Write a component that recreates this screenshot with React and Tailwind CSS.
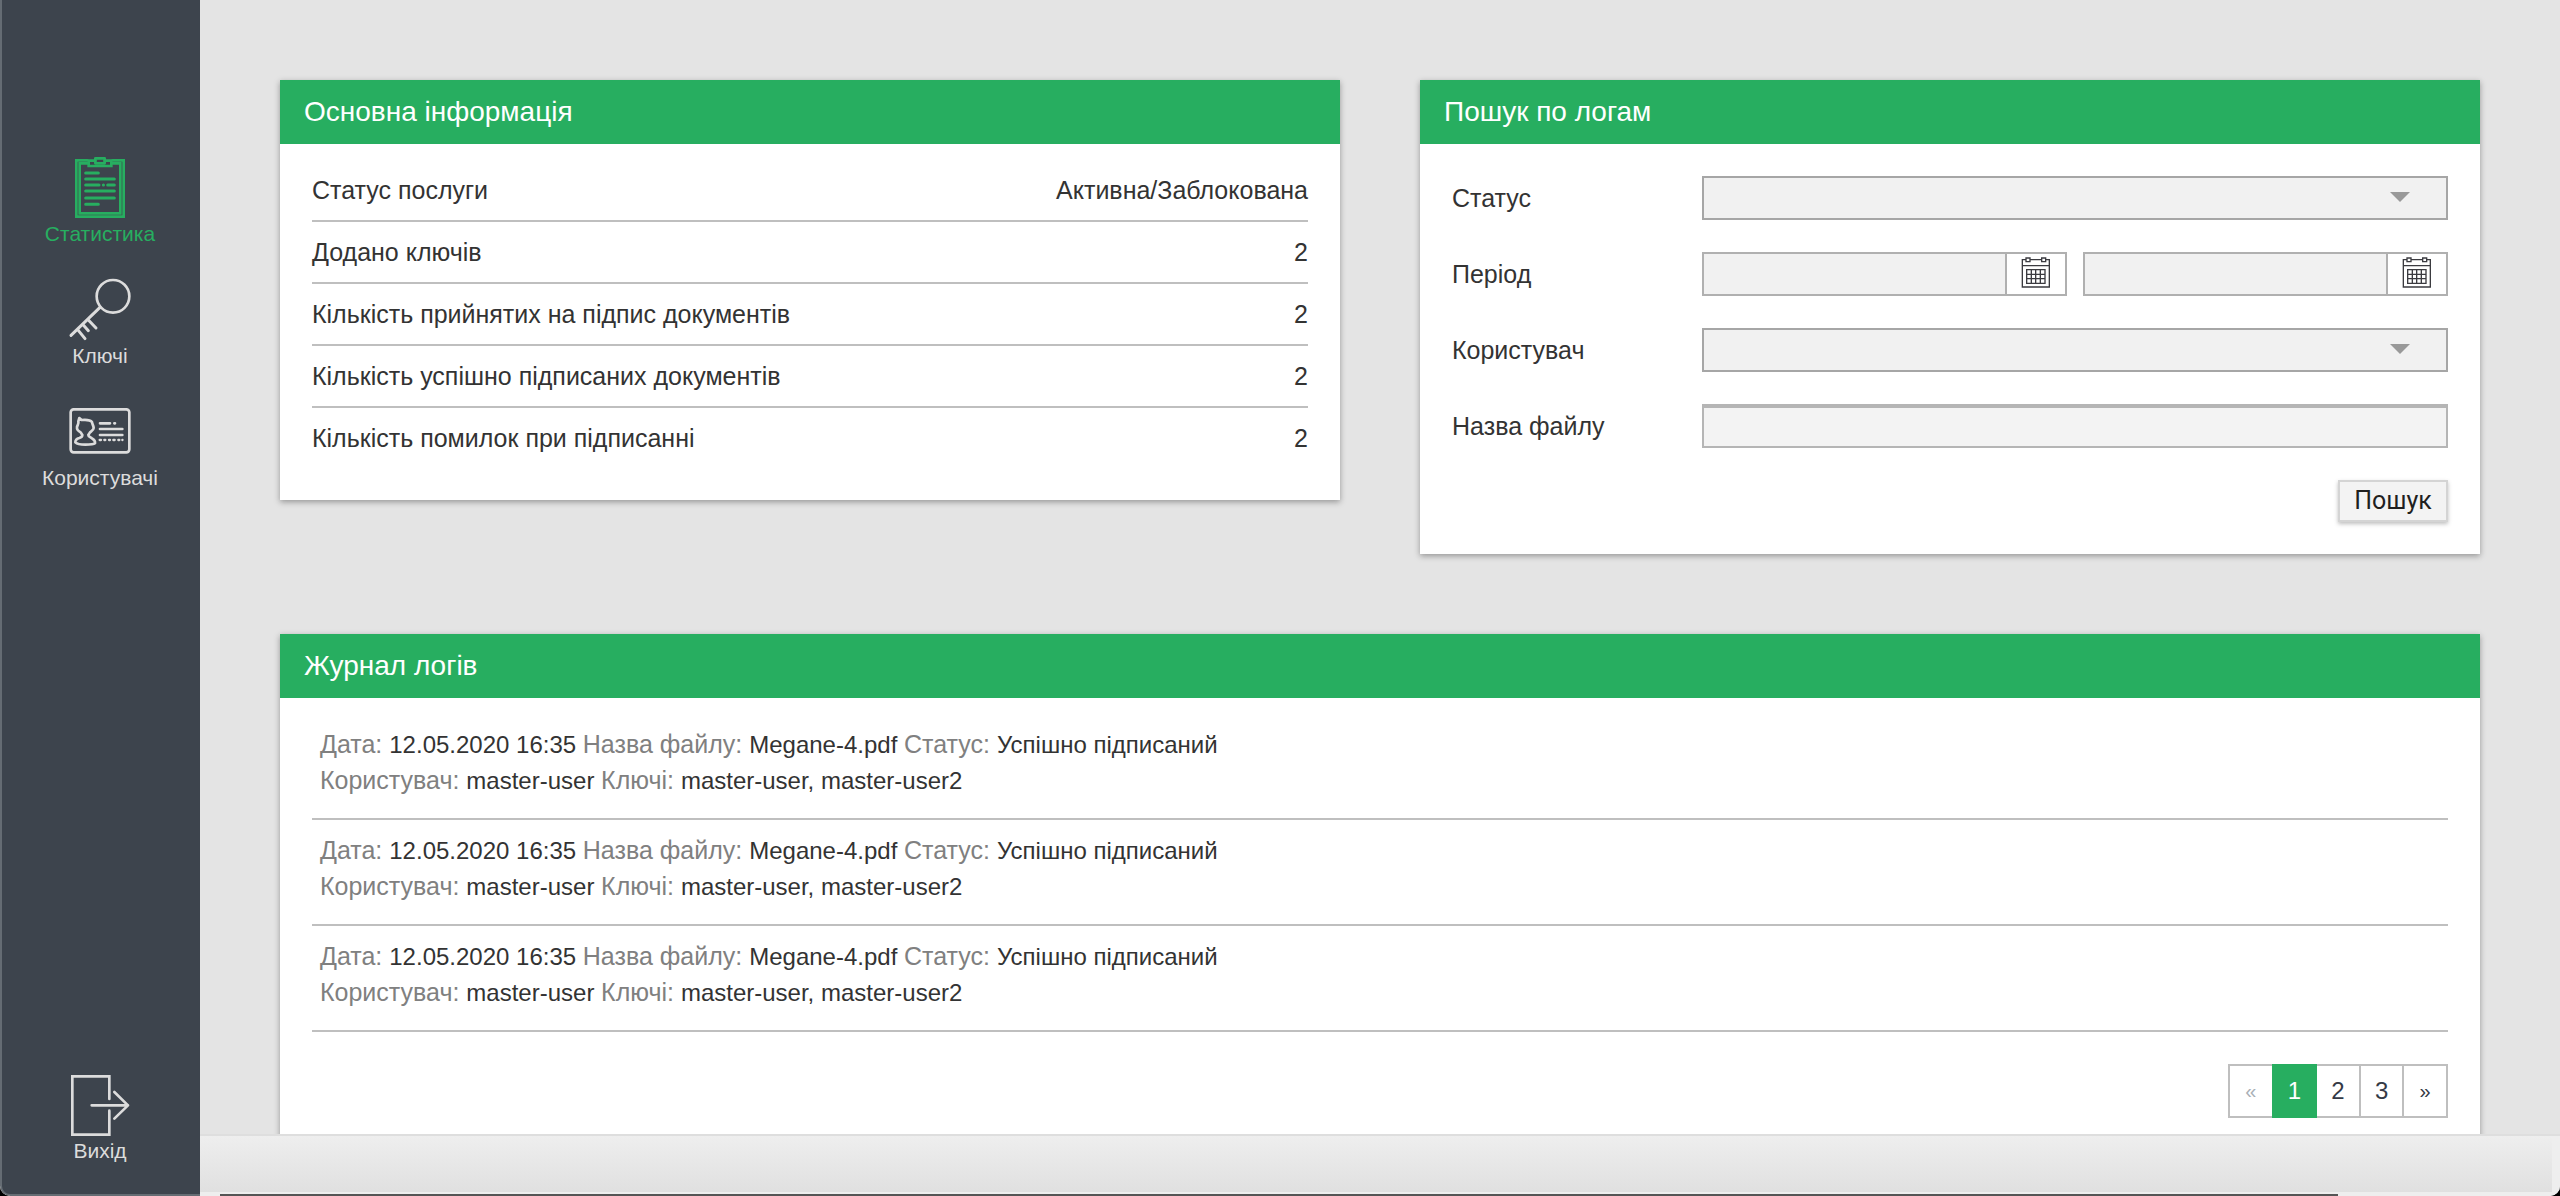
import React from "react";

const stats = [
  ["Статус послуги", "Активна/Заблокована"],
  ["Додано ключів", "2"],
  ["Кількість прийнятих на підпис документів", "2"],
  ["Кількість успішно підписаних документів", "2"],
  ["Кількість помилок при підписанні", "2"],
];

const log = {
  date: "12.05.2020 16:35",
  file: "Megane-4.pdf",
  status: "Успішно підписаний",
  user: "master-user",
  keys: "master-user, master-user2",
};
const logs = [log, log, log];

function NavSvg({ children }) {
  return (
    <svg
      viewBox="0 0 192 192"
      className="size-16"
      fill="none"
      stroke="currentColor"
      strokeWidth="8"
      strokeLinecap="round"
      strokeLinejoin="round"
      aria-hidden="true"
    >
      {children}
    </svg>
  );
}

function ClipboardIcon() {
  return (
    <NavSvg>
      <path d="M58 13H25V182H167V13H134" strokeLinejoin="miter" />
      <path d="M60 22H35V172H157V22H132" strokeLinejoin="miter" />
      <path d="M82 14H62V30H130V14H110" strokeLinejoin="miter" />
      <path d="M82 7H110V22H82Z" />
      <path d="M53 51H91M53 69H139M53 87H93M106 87H106.5M119 87H139M53 105H139M53 126H139M53 145H91" strokeWidth="9" />
    </NavSvg>
  );
}

function KeyIcon() {
  return (
    <NavSvg>
      <circle cx="135" cy="55" r="49" />
      <path d="M96 88L9 172M59 124L84 150M44 139L61 158M29 155L51 182" strokeWidth="9" />
    </NavSvg>
  );
}

function UsersIcon() {
  return (
    <NavSvg>
      <rect x="8" y="28" width="176" height="129" rx="9" />
      <path d="M34 54L41 60C52 59 66 58 72 66C72 72 76 74 77 84C77 90 71 93 66 97L61 105C61 110 66 111 72 115C79 119 82 124 81 130C76 134 64 134 52 134C40 134 28 133 22 127C22 120 26 116 34 114C41 112 43 110 43 105L38 97C30 93 26 88 27 81C28 75 33 72 31 64Z" />
      <path d="M96 70H126M139 70H141M96 87H163M96 105H163" />
      <path d="M95 120H99M109 120H112M123 120H126M136 120H140M151 120H154M163 120H163.5" strokeWidth="7" />
    </NavSvg>
  );
}

function ExitIcon() {
  return (
    <NavSvg>
      <path d="M124 78V10H13V185H124V113" strokeLinejoin="miter" />
      <path d="M71 97H180M139 57L180 97L139 137" />
    </NavSvg>
  );
}

function CalendarIcon() {
  return (
    <svg viewBox="0 0 96 96" className="size-8" fill="none" stroke="#3b3b40" strokeWidth="4" aria-hidden="true">
      <path d="M18 11H7V93H88V11H77M30 11H65M7 29H88" />
      <path d="M18 6H30V17H18ZM65 6H77V17H65Z" />
      <path d="M20 41H75V82H20ZM34 41V82M47 41V82M61 41V82M20 55H75M20 68H75" />
    </svg>
  );
}

function NavItem({ icon, label, active }) {
  return (
    <a
      href="#"
      aria-current={active ? "page" : undefined}
      className={
        active
          ? "flex flex-col items-center gap-0.5 text-[21px] leading-6 text-[#27ae60]"
          : "flex flex-col items-center gap-0.5 text-[21px] leading-6 text-[#dcdcdc]"
      }
    >
      {icon}
      {label}
    </a>
  );
}

function Card({ title, children }) {
  return (
    <section className="bg-white shadow-[0_2px_6px_rgba(0,0,0,0.35)]">
      <h2 className="bg-[#27ae60] px-6 text-[28px] leading-16 text-white">{title}</h2>
      {children}
    </section>
  );
}

function SelectField({ id }) {
  return (
    <div className="relative">
      <select id={id} className="block h-11 w-full appearance-none border-2 border-[#a6a6a6] bg-[#f1f1f1] px-3">
        <option value=""></option>
      </select>
      <svg viewBox="0 0 20 10" className="pointer-events-none absolute top-4 right-[38px] h-2.5 w-5 fill-[#999999]" aria-hidden="true">
        <path d="M0 0H20L10 10Z" />
      </svg>
    </div>
  );
}

function DateField({ id, label }) {
  return (
    <div className="flex h-11 min-w-0 flex-1 border-2 border-[#b0b0b0]">
      <input id={id} type="text" aria-label={label} className="min-w-0 flex-1 bg-[#f1f1f1] px-3 outline-none" />
      <button
        type="button"
        aria-label="Відкрити календар"
        className="flex w-[60px] shrink-0 justify-center border-l-2 border-[#b0b0b0] bg-white pt-0.5"
      >
        <CalendarIcon />
      </button>
    </div>
  );
}

function FormRow({ id, label, children }) {
  return (
    <div className="grid grid-cols-[250px_minmax(0,1fr)] items-center">
      <label htmlFor={id}>{label}</label>
      {children}
    </div>
  );
}

function Field({ name, value }) {
  return (
    <>
      <span className="text-[25px] text-[#808080]">{name}: </span>
      {value}{" "}
    </>
  );
}

const pageBase = "-ml-0.5 flex flex-1 items-center justify-center border-2 first:ml-0";

export default function App() {
  return (
    <div className="h-screen bg-black font-['Liberation_Sans',Arial,sans-serif] text-[25px] leading-9 text-[#333333]">
      <div className="flex h-full overflow-hidden rounded-b-[10px] bg-[#e4e4e4]">
        <nav className="flex w-[200px] shrink-0 flex-col justify-between rounded-bl-[10px] border-b-2 border-l-2 border-[#656c73] bg-[#3d444d] pt-39 pr-0.5 pb-[31px]">
          <div className="flex flex-col gap-8">
            <NavItem icon={<ClipboardIcon />} label="Статистика" active />
            <NavItem icon={<KeyIcon />} label="Ключі" />
            <NavItem icon={<UsersIcon />} label="Користувачі" />
          </div>
          <NavItem icon={<ExitIcon />} label="Вихід" />
        </nav>

        <div className="flex min-w-0 flex-1 flex-col">
          <main className="flex min-h-0 flex-1 flex-col gap-20 overflow-hidden p-20 pb-0">
            <div className="grid grid-cols-2 items-start gap-20">
              <Card title="Основна інформація">
                <table className="mx-8 mt-4 mb-8 w-[calc(100%-64px)] border-collapse">
                  <tbody>
                    {stats.map(([name, value]) => (
                      <tr key={name} className="border-b-2 border-[#bfbfbf] last:border-0">
                        <th scope="row" className="py-3 text-left font-normal">{name}</th>
                        <td className="py-3 text-right">{value}</td>
                      </tr>
                    ))}
                  </tbody>
                </table>
              </Card>

              <Card title="Пошук по логам">
                <form className="flex flex-col gap-8 p-8">
                  <FormRow id="status" label="Статус">
                    <SelectField id="status" />
                  </FormRow>
                  <FormRow id="from" label="Період">
                    <div className="flex gap-4">
                      <DateField id="from" label="Період від" />
                      <DateField id="to" label="Період до" />
                    </div>
                  </FormRow>
                  <FormRow id="user" label="Користувач">
                    <SelectField id="user" />
                  </FormRow>
                  <FormRow id="file" label="Назва файлу">
                    <input
                      id="file"
                      type="text"
                      className="h-11 w-full border-2 border-t-4 border-[#b5b5b5] bg-[#f3f3f3] px-3 outline-none"
                    />
                  </FormRow>
                  <button
                    type="button"
                    className="flex h-[42px] w-[110px] items-center justify-center self-end border-2 border-[#d4d4d4] bg-[#f3f3f3] font-['Roboto',sans-serif] text-[#1f1f1f] shadow-[0_2px_4px_rgba(0,0,0,0.25)]"
                  >
                    Пошук
                  </button>
                </form>
              </Card>
            </div>

            <Card title="Журнал логів">
              <div className="px-8 pt-4 pb-8 text-[24px]">
                <ul>
                  {logs.map((l, i) => (
                    <li key={i} className="border-b-2 border-[#bfbfbf] px-2 pt-3 pb-5">
                      <p className="h-9">
                        <Field name="Дата" value={l.date} />
                        <Field name="Назва файлу" value={l.file} />
                        <Field name="Статус" value={l.status} />
                      </p>
                      <p className="h-9">
                        <Field name="Користувач" value={l.user} />
                        <Field name="Ключі" value={l.keys} />
                      </p>
                    </li>
                  ))}
                </ul>
                <div className="mt-8 ml-auto flex h-[54px] w-[220px] text-[#343a46]">
                  <button type="button" disabled aria-label="Попередня" className={pageBase + " border-[#bfbfbf] text-[20px] text-[#a9afb6]"}>«</button>
                  <button type="button" aria-current="page" className={pageBase + " z-10 border-[#27ae60] bg-[#27ae60] text-white"}>1</button>
                  <button type="button" className={pageBase + " border-[#bfbfbf]"}>2</button>
                  <button type="button" className={pageBase + " border-[#bfbfbf]"}>3</button>
                  <button type="button" aria-label="Наступна" className={pageBase + " border-[#bfbfbf] text-[20px]"}>»</button>
                </div>
              </div>
            </Card>
          </main>
          <footer className="flex h-[62px] shrink-0 flex-col border-t-2 border-[#dedede] bg-[#eeeeee]">
            <div className="mr-2 flex-1 bg-linear-to-b from-[#eeeeee] to-[#e0e0e0]" />
            <div className="mt-0.5 mr-[222px] ml-5 h-0.5 bg-[#555555]" />
          </footer>
        </div>
      </div>
    </div>
  );
}
